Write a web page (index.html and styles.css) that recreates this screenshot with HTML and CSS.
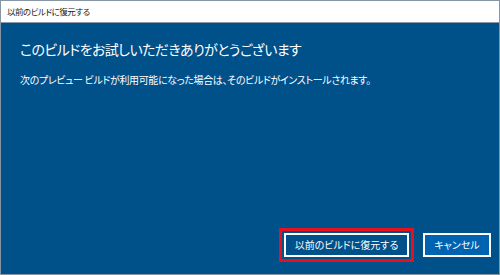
FILE: index.html
```html
<!DOCTYPE html>
<html lang="ja">
<head>
<meta charset="utf-8">
<link rel="stylesheet" href="styles.css">
</head>
<body>
<div class="window">
  <div class="titlebar">以前のビルドに復元する</div>
  <div class="content">
    <h1 class="heading">このビルドをお試しいただきありがとうございます</h1>
    <p class="desc">次のプレビュー ビルドが利用可能になった場合は、そのビルドがインストールされます。</p>
    <div class="actions">
      <div class="highlight"><button class="btn btn-primary">以前のビルドに復元する</button></div>
      <button class="btn btn-secondary">キャンセル</button>
    </div>
  </div>
</div>
</body>
</html>
```
FILE: styles.css
```css
html, body {
  margin: 0;
  padding: 0;
  width: 500px;
  height: 275px;
  overflow: hidden;
}
body {
  font-family: "Noto Sans CJK JP", "Noto Sans", sans-serif;
  font-feature-settings: "palt";
}
.window {
  box-sizing: border-box;
  width: 500px;
  height: 275px;
  border: 1px solid #8796a5;
  display: flex;
  flex-direction: column;
  background: #00508a;
}
.titlebar {
  height: 21px;
  background: #ffffff;
  border-bottom: 1px solid #8a9aaa;
  color: #222;
  font-size: 8.5px;
  letter-spacing: -0.5px;
  line-height: 21px;
  padding-left: 6px;
  flex: none;
}
.content {
  flex: 1;
  display: flex;
  flex-direction: column;
  padding: 0 8px 0 19px;
  color: #fff;
}
.heading {
  margin: 14px 0 0 0;
  font-size: 14px;
  letter-spacing: -0.6px;
  font-weight: normal;
  line-height: 24px;
}
.desc {
  margin: 11px 0 0 0;
  font-size: 10px;
  letter-spacing: -0.35px;
  line-height: 16px;
}
.actions {
  margin-top: auto;
  margin-bottom: 12px;
  display: flex;
  justify-content: flex-end;
  align-items: center;
  gap: 9px;
}
.highlight {
  border: 3px solid #e8101c;
  padding: 2px;
}
.btn {
  box-sizing: border-box;
  height: 24px;
  border: 2px solid #ffffff;
  color: #ffffff;
  font-family: inherit;
  font-feature-settings: "palt";
  font-size: 10px;
  line-height: 18px;
  white-space: nowrap;
  padding: 0;
  margin: 0;
  display: block;
}
.btn-primary {
  width: 125px;
  background: #00508a;
}
.btn-secondary {
  width: 68px;
  background: #0063b1;
}
```
